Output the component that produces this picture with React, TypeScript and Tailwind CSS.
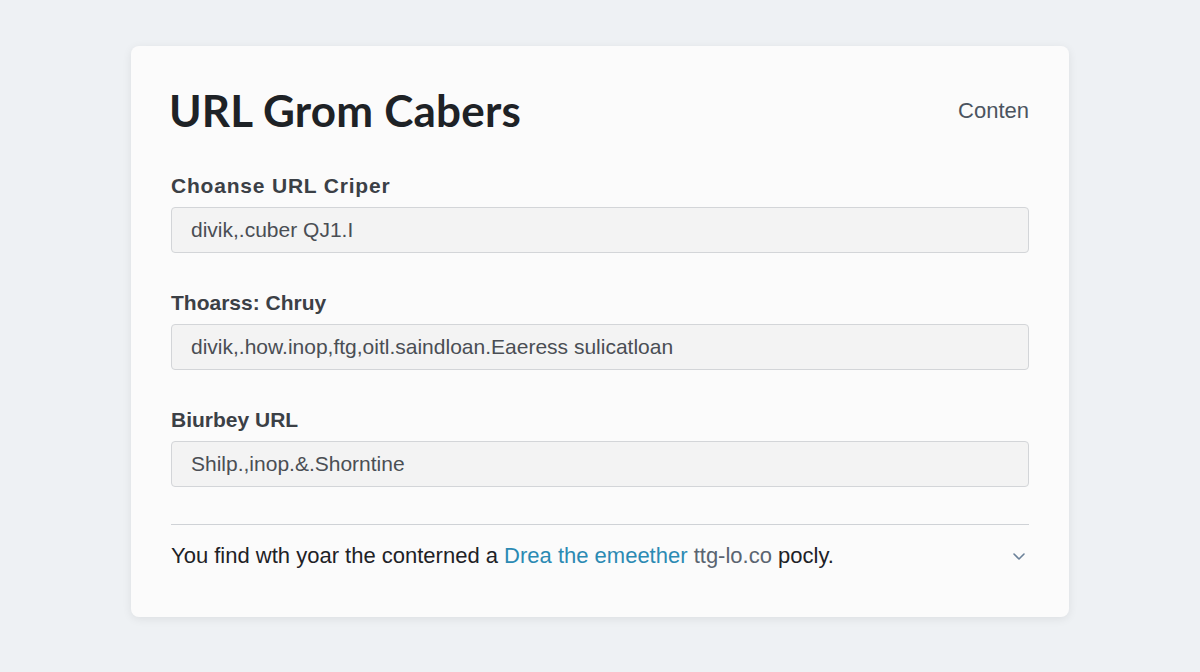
import React from "react";

const sans = { fontFamily: '"Liberation Sans", Arial, sans-serif' };

function Field({ label, value, wide }: { label: string; value: string; wide?: boolean }) {
  return (
    <div className="flex flex-col">
      <div className={"h-[24px] text-[21px] leading-[24px] font-bold text-[#3b4046] " + (wide ? "tracking-[0.8px]" : "tracking-[0px]")} style={sans}>
        {label}
      </div>
      <div className="mt-[9px] h-[46px] rounded-[4px] border border-[#d3d5d8] bg-[#f3f3f3] px-[19px] flex items-center text-[21px] text-[#4a4e54]" style={sans}>
        {value}
      </div>
    </div>
  );
}

export default function App() {
  return (
    <div className="w-[1200px] h-[672px] bg-[#eef1f4] flex justify-center pt-[46px]" style={{ fontFamily: 'Lato, "Liberation Sans", sans-serif' }}>
      <div className="w-[938px] h-[571px] rounded-[8px] bg-[#fbfbfb] shadow-[0_2px_10px_rgba(0,0,0,0.08)] px-[40px] flex flex-col">
        <div className="mt-[40px] h-[48px] flex items-center justify-between">
          <div className="text-[44px] font-bold text-[#1e2226] tracking-[0.2px] leading-[48px] -ml-[2px]">URL Grom Cabers</div>
          <div className="text-[22px] text-[#4b5460] leading-[24px] mt-[2px]" style={sans}>Conten</div>
        </div>
        <div className="mt-[40px] flex flex-col gap-[38px]">
          <Field label="Choanse URL Criper" value="divik,.cuber QJ1.I" wide />
          <Field label="Thoarss: Chruy" value="divik,.how.inop,ftg,oitl.saindloan.Eaeress sulicatloan" />
          <Field label="Biurbey URL" value="Shilp.,inop.&.Shorntine" />
        </div>
        <div className="mt-[37px] h-px bg-[#cfd2d6]" />
        <div className="mt-[19px] flex items-center justify-between">
          <div className="text-[22px] text-[#1e2226] leading-[24px]" style={sans}>
            You find wth yoar the conterned a <span className="text-[#2b8ab3]">Drea the emeether</span> <span className="text-[#5a6470]">ttg-lo.co</span> pocly.
          </div>
          <svg width="14" height="10" viewBox="0 0 14 10" className="mr-[3px]">
            <path d="M2 3 L7 8 L12 3" fill="none" stroke="#6b8199" strokeWidth="1.6" strokeLinecap="round" strokeLinejoin="round" />
          </svg>
        </div>
      </div>
    </div>
  );
}
